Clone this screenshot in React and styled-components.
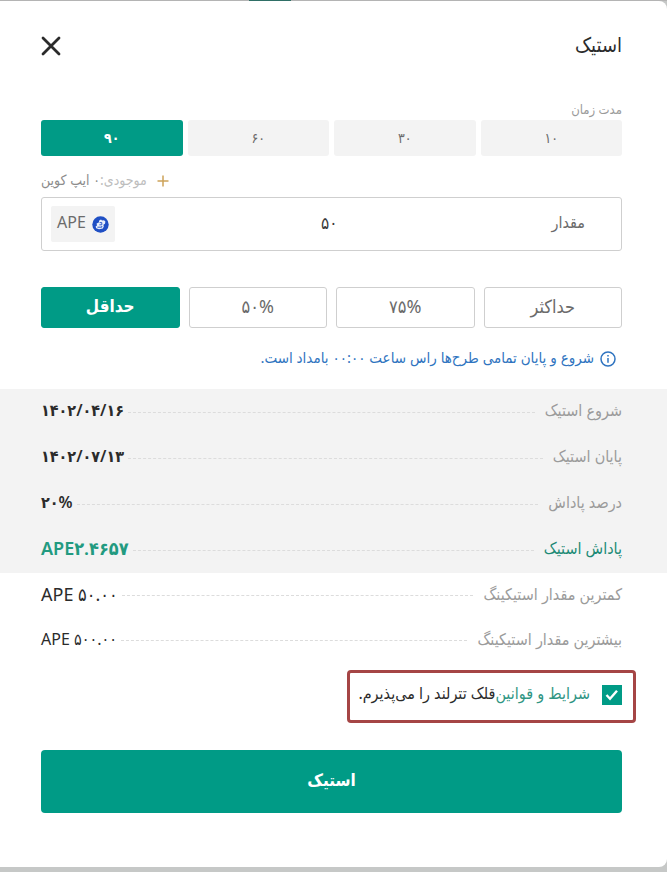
import React, { useState } from 'react';
import styled, { createGlobalStyle } from 'styled-components';

const durations = ['۱۰', '۳۰', '۶۰', '۹۰'];

const presets = [
  { label: 'حداکثر', amount: '۵۰۰' },
  { label: '۷۵%', amount: '۳۷۵' },
  { label: '۵۰%', amount: '۲۵۰' },
  { label: 'حداقل', amount: '۵۰' }
];

const summary = [
  { label: 'شروع استیک', value: '۱۴۰۲/۰۴/۱۶' },
  { label: 'پایان استیک', value: '۱۴۰۲/۰۷/۱۳' },
  { label: 'درصد پاداش', value: '۲۰%' },
  { label: 'پاداش استیک', value: 'APE۲.۴۶۵۷', accent: true, large: true }
];

const limits = [
  { label: 'کمترین مقدار استیکینگ', value: 'APE ۵۰.۰۰', large: true },
  { label: 'بیشترین مقدار استیکینگ', value: 'APE ۵۰۰.۰۰' }
];

const CloseIcon = () => (
  <svg width="20" height="20" viewBox="0 0 20 20" fill="none" stroke="#2b2b2b" strokeWidth="2.8" strokeLinecap="round">
    <path d="M2 2L18 18M18 2L2 18" />
  </svg>
);

const PlusIcon = () => (
  <svg width="12" height="12" viewBox="0 0 12 12" fill="none" stroke="#cda35a" strokeWidth="1.5">
    <path d="M6 0.5V11.5M0.5 6H11.5" />
  </svg>
);

const InfoIcon = () => (
  <svg width="16" height="16" viewBox="0 0 16 16" fill="none" stroke="#2f74c0" strokeWidth="1.5">
    <circle cx="8" cy="8" r="7" />
    <path d="M8 7V11.8" />
    <path d="M8 4V5.6" />
  </svg>
);

const ApeIcon = () => (
  <svg width="17" height="17" viewBox="0 0 17 17">
    <circle cx="8.5" cy="8.5" r="8.2" fill="#1f4fc4" />
    <path d="M7.2 4.4L9 3.6L10 4.4L12 4.2L13.4 5.6L13 7.8L11.4 8.8L11.8 10.6L10.8 12.6L7 13.2L4.2 12.2L3.6 10.4L5 9.6L4.6 7.4L6.8 6.6Z" fill="#e9effb" />
    <path d="M7.6 6.6H9.8V8.8H7.4M5.4 11.2H9.8V10" stroke="#1f4fc4" strokeWidth="0.9" fill="none" />
  </svg>
);

const App = () => {
  const [duration, setDuration] = useState('۹۰');
  const [preset, setPreset] = useState('حداقل');
  const [amount, setAmount] = useState('۵۰');
  const [accepted, setAccepted] = useState(true);

  const handlePreset = (item) => {
    setPreset(item.label);
    setAmount(item.amount);
  };

  const handleSubmit = (e) => {
    e.preventDefault();
  };

  return (
    <>
      <GlobalStyle />
      <PageEdge>
        <ActiveTab />
      </PageEdge>
      <Modal dir="rtl" onSubmit={handleSubmit}>
        <Header>
          <h2>استیک</h2>
          <CloseButton type="button" aria-label="بستن">
            <CloseIcon />
          </CloseButton>
        </Header>

        <Section>
          <FieldLabel id="duration">مدت زمان</FieldLabel>
          <DurationGroup role="group" aria-labelledby="duration">
            {durations.map((item) => (
              <DurationButton
                key={item}
                type="button"
                $active={item === duration}
                onClick={() => setDuration(item)}
              >
                {item}
              </DurationButton>
            ))}
          </DurationGroup>

          <Balance>
            <PlusIcon />
            <p>
              موجودی:<span>۰ ایپ کوین</span>
            </p>
          </Balance>

          <AmountField>
            <label htmlFor="amount">مقدار</label>
            <input id="amount" type="text" value={amount} onChange={(e) => setAmount(e.target.value)} />
            <Coin>
              <ApeIcon />
              <span>APE</span>
            </Coin>
          </AmountField>

          <PresetGroup>
            {presets.map((item) => (
              <PresetButton
                key={item.label}
                type="button"
                dir="ltr"
                $active={item.label === preset}
                onClick={() => handlePreset(item)}
              >
                {item.label}
              </PresetButton>
            ))}
          </PresetGroup>

          <Notice>
            <InfoIcon />
            <span>شروع و پایان تمامی طرح‌ها راس ساعت ۰۰:۰۰ بامداد است.</span>
          </Notice>
        </Section>

        <DetailList $shaded>
          {summary.map((item) => (
            <DetailRow key={item.label} $accent={item.accent} $large={item.large} $strong>
              <dt>{item.label}</dt>
              <Leader />
              <dd dir="ltr">{item.value}</dd>
            </DetailRow>
          ))}
        </DetailList>
        <DetailList>
          {limits.map((item) => (
            <DetailRow key={item.label} $large={item.large}>
              <dt>{item.label}</dt>
              <Leader />
              <dd dir="ltr">{item.value}</dd>
            </DetailRow>
          ))}
        </DetailList>

        <Terms>
          <input
            id="terms"
            type="checkbox"
            checked={accepted}
            onChange={(e) => setAccepted(e.target.checked)}
          />
          <label htmlFor="terms">
            {/* the non-joiner keeps the link's last letter in its final form */}
            <a href="#terms">شرایط و قوانین</a>&zwnj;قلک تترلند را می‌پذیرم.
          </label>
        </Terms>

        <SubmitButton type="submit">استیک</SubmitButton>
      </Modal>
    </>
  );
};

const GlobalStyle = createGlobalStyle`
  * {
    box-sizing: border-box;
  }

  body {
    margin: 0;
    background: #c6c8c7;
    font-family: 'Noto Sans', 'DejaVu Sans Condensed', 'DejaVu Sans', sans-serif;
    color: #2b2b2b;
  }

  button,
  input {
    font-family: inherit;
  }

  h2,
  p,
  dl,
  dd {
    margin: 0;
  }
`;

const PageEdge = styled.div`
  display: flex;
  height: 1px;
  padding-left: 249px;
  background: #b4b4b4;
`;

const ActiveTab = styled.div`
  width: 42px;
  background: #2f6f66;
`;

const Modal = styled.form`
  background: #fff;
  border-radius: 0 8px 8px 0;
  padding-bottom: 54px;
`;

const Header = styled.header`
  display: flex;
  justify-content: space-between;
  align-items: center;
  height: 90px;
  padding: 0 45px 0 41px;

  h2 {
    padding-bottom: 2px;
    font-size: 20px;
    line-height: 24px;
    font-weight: 400;
  }
`;

const CloseButton = styled.button`
  display: flex;
  padding: 0;
  border: none;
  background: none;
  cursor: pointer;
`;

const Section = styled.section`
  padding: 8px 45px 0 41px;
`;

const FieldLabel = styled.p`
  font-size: 13px;
  line-height: 21px;
  color: #9b9b9b;
`;

const DurationGroup = styled.div`
  display: grid;
  grid-template-columns: repeat(4, 1fr);
  gap: 5px;
`;

const DurationButton = styled.button`
  height: 36px;
  padding: 0 0 2px;
  border: none;
  border-radius: 3px;
  background: ${(props) => (props.$active ? '#009b86' : '#f3f3f3')};
  color: ${(props) => (props.$active ? '#fff' : '#6b6b6b')};
  font-size: 14px;
  font-weight: ${(props) => (props.$active ? 600 : 400)};
  cursor: pointer;
`;

const Balance = styled.div`
  display: flex;
  justify-content: flex-end;
  align-items: center;
  gap: 10px;
  height: 41px;
  padding-top: 8px;
  font-size: 14px;
  color: #bdbdbd;

  p {
    padding-bottom: 2px;
  }

  span {
    color: #8c8c8c;
  }
`;

const AmountField = styled.div`
  display: grid;
  grid-template-columns: auto 1fr auto;
  align-items: center;
  height: 54px;
  padding: 0 36px 0 9px;
  border: 1px solid #cfcfcf;
  border-radius: 3px;

  label {
    padding-bottom: 4px;
    font-size: 16px;
    color: #6b6b6b;
  }

  input {
    width: 100%;
    padding: 0 8px 4px 0;
    border: none;
    outline: none;
    background: none;
    font-size: 17px;
    text-align: center;
    color: #3b3b3b;
  }
`;

const Coin = styled.div`
  display: flex;
  align-items: center;
  gap: 6px;
  height: 36px;
  padding: 0 6px;
  border-radius: 2px;
  background: #f3f3f3;
  font-size: 16px;
  color: #6b6b6b;

  span {
    padding-bottom: 4px;
  }
`;

const PresetGroup = styled.div`
  display: grid;
  grid-template-columns: repeat(4, 1fr);
  gap: 9px;
  margin-top: 36px;
`;

const PresetButton = styled.button`
  height: 41px;
  padding: 0 0 4px;
  border: 1px solid ${(props) => (props.$active ? '#009b86' : '#cfcfcf')};
  border-radius: 3px;
  background: ${(props) => (props.$active ? '#009b86' : '#fff')};
  color: ${(props) => (props.$active ? '#fff' : '#6b6b6b')};
  font-size: ${(props) => (props.$active ? '17px' : '18px')};
  font-weight: ${(props) => (props.$active ? 600 : 400)};
  cursor: pointer;
`;

const Notice = styled.p`
  display: flex;
  align-items: center;
  gap: 6px;
  height: 61px;
  padding-right: 6px;
  font-size: 15px;
  color: #2f74c0;

  span {
    padding-bottom: 4px;
  }
`;

const DetailList = styled.dl`
  padding: 0 45px 0 41px;
  background: ${(props) => (props.$shaded ? '#f3f3f3' : 'transparent')};
`;

const DetailRow = styled.div`
  display: flex;
  align-items: center;
  height: ${(props) => (props.$strong ? '46px' : '45px')};

  dt {
    padding-bottom: 4px;
    font-size: 16px;
    color: ${(props) => (props.$accent ? '#1b8a75' : '#9b9b9b')};
  }

  dd {
    padding-bottom: 4px;
    font-size: ${(props) => (props.$large ? '18px' : '16px')};
    color: ${(props) => (props.$accent ? '#229a80' : '#2b2b2b')};
    font-weight: ${(props) => (props.$strong ? 600 : 400)};
  }
`;

const Leader = styled.span`
  flex: 1;
  margin: 0 10px 0 4px;
  border-top: 1px dashed #dcdcdc;
`;

const Terms = styled.div`
  display: flex;
  align-items: center;
  gap: 12px;
  width: fit-content;
  height: 53px;
  margin: 7px 31px 27px;
  padding: 0 11px 4px 8px;
  border: 3px solid #a54545;
  border-radius: 4px;
  font-size: 16px;

  label {
    padding-bottom: 4px;
  }

  input {
    appearance: none;
    width: 20px;
    height: 20px;
    margin: 0;
    background: #fff;
    border: 1px solid #009b86;
    cursor: pointer;

    &:checked {
      background: #009b86
        url("data:image/svg+xml,%3Csvg xmlns='http://www.w3.org/2000/svg' viewBox='0 0 20 20' fill='none' stroke='white' stroke-width='2.4'%3E%3Cpath d='M4.5 10l3.5 3.7 7-8'/%3E%3C/svg%3E")
        center / 20px no-repeat;
    }
  }

  a {
    color: #2f9583;
    text-decoration: none;
  }
`;

const SubmitButton = styled.button`
  display: block;
  width: calc(100% - 86px);
  height: 63px;
  margin: 0 45px 0 41px;
  padding: 0 0 4px;
  border: none;
  border-radius: 4px;
  background: #009b86;
  color: #fff;
  font-size: 17px;
  font-weight: 600;
  cursor: pointer;
`;

export default App;
